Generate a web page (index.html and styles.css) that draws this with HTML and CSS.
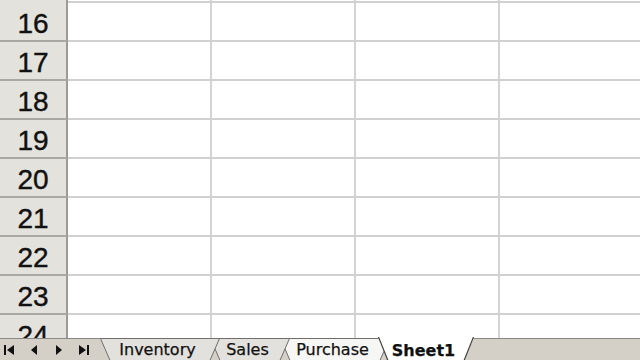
FILE: index.html
```html
<!DOCTYPE html>
<html>
<head>
<meta charset="utf-8">
<link rel="stylesheet" href="styles.css">
</head>
<body>
<div class="window">
  <div class="sheet">
    <div class="rh"></div><div class="c"></div><div class="c"></div><div class="c"></div><div class="c"></div>
    <div class="rh">16</div><div class="c"></div><div class="c"></div><div class="c"></div><div class="c"></div>
    <div class="rh">17</div><div class="c"></div><div class="c"></div><div class="c"></div><div class="c"></div>
    <div class="rh">18</div><div class="c"></div><div class="c"></div><div class="c"></div><div class="c"></div>
    <div class="rh">19</div><div class="c"></div><div class="c"></div><div class="c"></div><div class="c"></div>
    <div class="rh">20</div><div class="c"></div><div class="c"></div><div class="c"></div><div class="c"></div>
    <div class="rh">21</div><div class="c"></div><div class="c"></div><div class="c"></div><div class="c"></div>
    <div class="rh">22</div><div class="c"></div><div class="c"></div><div class="c"></div><div class="c"></div>
    <div class="rh">23</div><div class="c"></div><div class="c"></div><div class="c"></div><div class="c"></div>
    <div class="rh">24</div><div class="c"></div><div class="c"></div><div class="c"></div><div class="c"></div>
  </div>
  <div class="tabbar">
    <div class="nav">
      <svg class="navbtn" viewBox="0 0 12 12"><rect x="1" y="1" width="2" height="10"/><polygon points="11,1 11,11 4,6"/></svg>
      <svg class="navbtn" viewBox="0 0 12 12"><polygon points="9,1 9,11 3,6"/></svg>
      <svg class="navbtn" viewBox="0 0 12 12"><polygon points="3,1 3,11 9,6"/></svg>
      <svg class="navbtn" viewBox="0 0 12 12"><polygon points="1,1 1,11 8,6"/><rect x="9" y="1" width="2" height="10"/></svg>
    </div>
    <div class="tab tab-inventory">
      <svg class="shape" width="120" height="24" viewBox="0 0 120 24"><polygon points="0.5,0.5 119.5,0.5 109.5,23.5 10.5,23.5"/></svg>
      <span class="label">Inventory</span>
    </div>
    <div class="tab tab-sales">
      <svg class="shape" width="80" height="24" viewBox="0 0 80 24"><polygon points="0.5,0.5 79.5,0.5 69.5,23.5 10.5,23.5"/></svg>
      <span class="label">Sales</span>
    </div>
    <div class="tab tab-purchase">
      <svg class="shape" width="110" height="24" viewBox="0 0 110 24"><polygon points="0.5,0.5 109.5,0.5 99.5,23.5 10.5,23.5"/></svg>
      <span class="label">Purchase</span>
    </div>
    <div class="tab tab-active">
      <svg class="shape" width="96" height="25" viewBox="0 0 96 25"><polygon class="fill" points="0,0 96,0 86,25 10,25"/><polyline class="edge" points="0.5,0 10.5,25"/><polyline class="edge" points="95.5,0 85.5,25"/></svg>
      <span class="label">Sheet1</span>
    </div>
  </div>
</div>
</body>
</html>
```
FILE: styles.css
```css
html, body {
  margin: 0;
  padding: 0;
  background: #ffffff;
}
.window {
  width: 640px;
  height: 360px;
  overflow: hidden;
  display: flex;
  flex-direction: column;
}
.sheet {
  height: 338px;
  flex: none;
  overflow: hidden;
  display: grid;
  grid-template-columns: 68px repeat(4, 144px);
  grid-template-rows: 3px repeat(9, 39px);
  background: #ffffff;
}
.sheet > div {
  box-sizing: border-box;
}
.rh {
  background: #e3e2dc;
  border-right: 2px solid #9c9b96;
  border-bottom: 2px solid #a9a8a2;
  display: flex;
  align-items: center;
  justify-content: center;
  font-family: "Liberation Sans", Arial, sans-serif;
  font-size: 28px;
  color: #111111;
  padding-top: 4px;
  -webkit-text-stroke: 0.4px #111111;
}
.c {
  border-right: 2px solid #d3d3d3;
  border-bottom: 2px solid #d0d0d0;
}
.tabbar {
  height: 22px;
  flex: none;
  display: flex;
  align-items: flex-start;
  background: #d4d0c8;
  border-top: 1px solid #8a8883;
  box-sizing: border-box;
  font-family: "DejaVu Sans", Verdana, sans-serif;
  font-size: 16px;
  color: #111111;
}
.nav {
  width: 100px;
  flex: none;
  display: flex;
  align-items: center;
  gap: 13px;
  padding-left: 3px;
  height: 21px;
  box-sizing: border-box;
}
.navbtn {
  width: 12px;
  height: 12px;
  fill: #111111;
}
.tab {
  display: grid;
  flex: none;
  height: 24px;
  margin-top: -1px;
}
.tab > * {
  grid-area: 1 / 1;
}
.shape {
  display: block;
}
.shape polygon {
  stroke: #6f6e6a;
  stroke-width: 1;
}
.label {
  display: flex;
  align-items: center;
  justify-content: center;
  height: 22px;
  padding-right: 5px;
  padding-top: 2px;
  box-sizing: border-box;
  line-height: 1;
  position: relative;
  -webkit-text-stroke: 0.25px #111111;
}
.tab-inventory {
  width: 120px;
  z-index: 3;
}
.tab-inventory polygon { fill: #e2e1dd; }
.tab-sales {
  width: 80px;
  margin-left: -10px;
  z-index: 2;
}
.tab-sales polygon { fill: #e2e1dd; }
.tab-purchase {
  width: 110px;
  margin-left: -10px;
  z-index: 1;
}
.tab-purchase polygon { fill: #f6f6f4; }
.tab-active {
  width: 96px;
  margin-left: -12px;
  margin-top: -2px;
  height: 25px;
  z-index: 5;
  font-weight: bold;
}
.tab-active .fill {
  fill: #ffffff;
  stroke: none;
}
.tab-active .edge {
  stroke: #3d3d3b;
  stroke-width: 1.2;
  fill: none;
}
.tab-active .label {
  height: 25px;
  padding-top: 3px;
}
```
